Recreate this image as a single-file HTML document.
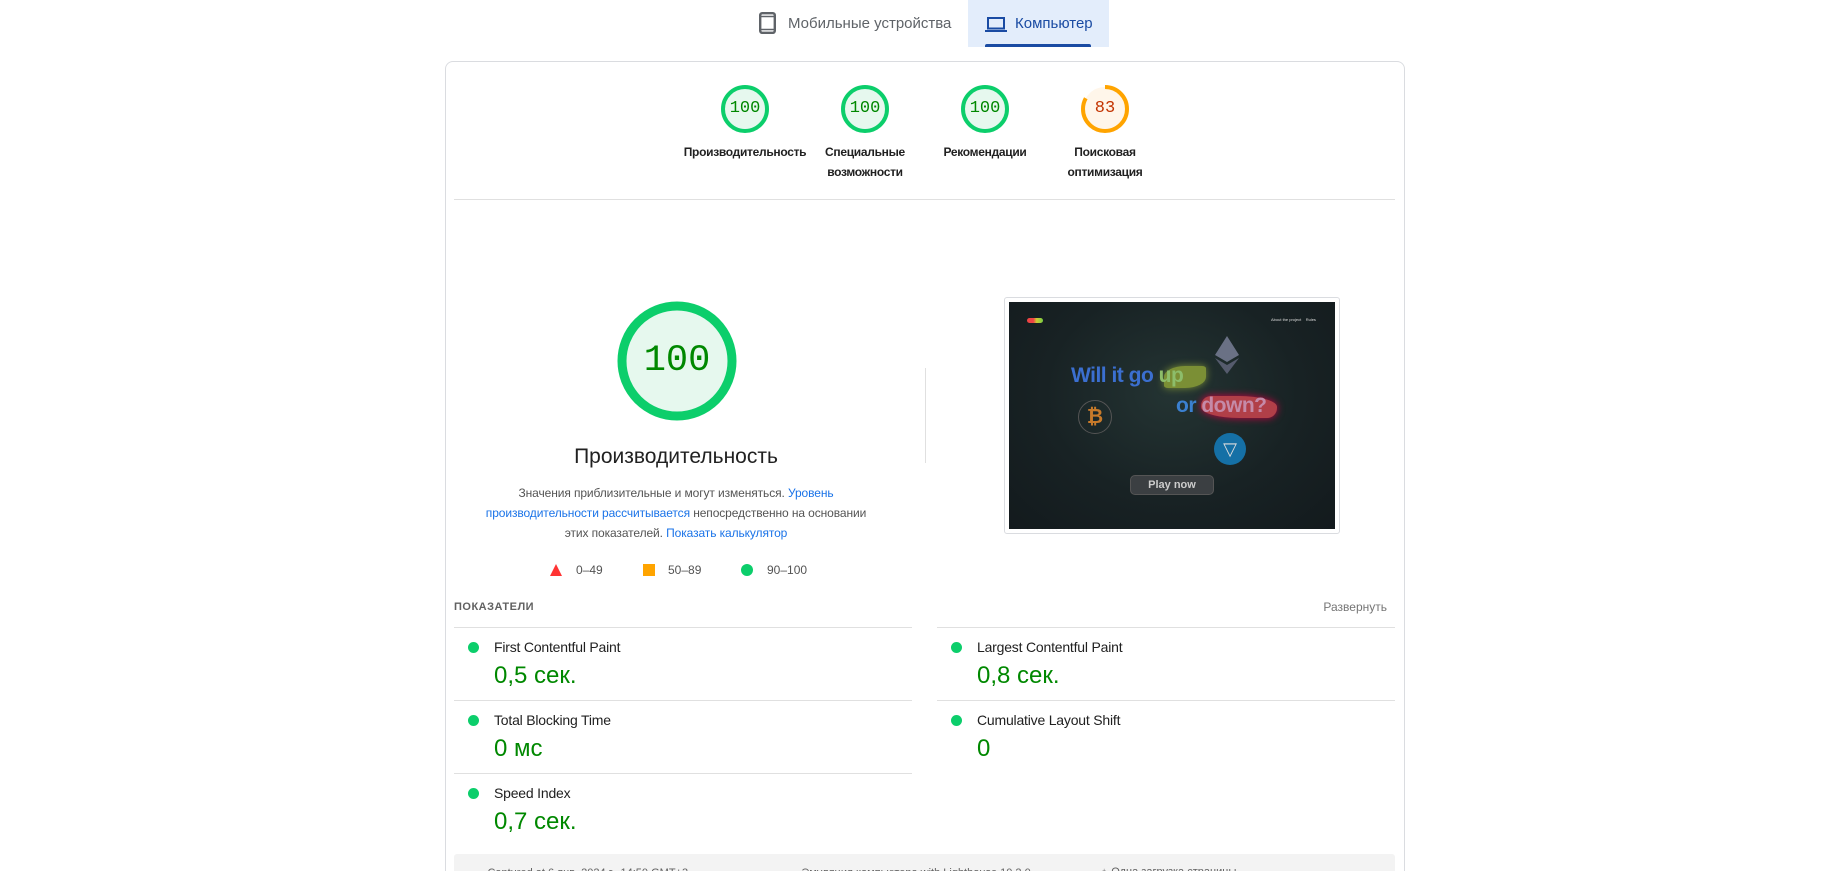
<!DOCTYPE html>
<html style="width:1848px;height:871px;overflow:hidden"><head><meta charset="utf-8"><style>
*{margin:0;padding:0;box-sizing:border-box}
body{width:1848px;height:871px;overflow:hidden;background:#fff;font-family:"Liberation Sans",Arial,sans-serif;position:relative;color:#212121}
.a{position:absolute}
.tabtxt{font-size:15px;top:15px;white-space:nowrap}
.card{left:445px;top:61px;width:960px;height:830px;border:1px solid #dadce0;border-radius:8px}
.g{width:48px;height:48px}
.gl{font-size:12px;font-weight:bold;color:#212121;text-align:center;line-height:20px;width:140px;letter-spacing:-0.3px}
.mono{font-family:"Liberation Mono",monospace}
.desc{font-size:12px;color:#545454;text-align:center;line-height:20px;width:406px;left:473px;top:483px;letter-spacing:-0.1px}
.desc a{color:#1a73e8;text-decoration:none}
.hr{height:1px;background:#e0e0e0}
.dot{width:11px;height:11px;border-radius:50%;background:#0cce6b}
.mt{font-size:14px;color:#212121;letter-spacing:-0.2px}
.mv{font-size:24px;color:#008800}
</style></head><body>
<svg class="a" style="left:759px;top:12px" width="17" height="22" viewBox="0 0 17 22"><rect x="1.2" y="1.2" width="14.6" height="19.6" rx="2" fill="none" stroke="#5f6368" stroke-width="2.4"/><line x1="1" y1="4.5" x2="16" y2="4.5" stroke="#5f6368" stroke-width="1.5"/><line x1="1" y1="17.5" x2="16" y2="17.5" stroke="#5f6368" stroke-width="1.5"/></svg>
<div class="a tabtxt" style="left:788px;color:#5f6368">Мобильные устройства</div>
<div class="a" style="left:968px;top:0;width:141px;height:47px;background:#e3edfb"></div>
<div class="a" style="left:985px;top:44px;width:106px;height:3px;background:#1a4ba3;border-radius:2px 2px 0 0"></div>
<svg class="a" style="left:985px;top:17px" width="22" height="15" viewBox="0 0 22 15"><rect x="3" y="1" width="16" height="10.5" fill="none" stroke="#1a4ba3" stroke-width="2"/><rect x="0" y="13" width="22" height="2" fill="#1a4ba3"/></svg>
<div class="a tabtxt" style="left:1015px;color:#1a4ba3">Компьютер</div>

<div class="a card"></div>

<svg class="a g" style="left:721px;top:85px" viewBox="0 0 48 48"><circle cx="24" cy="24" r="22" fill="#e6f8ee" stroke="#0cce6b" stroke-width="4"/></svg>
<div class="a mono" style="left:721px;top:85px;width:48px;line-height:48px;text-align:center;font-size:17px;color:#008800">100</div>
<svg class="a g" style="left:841px;top:85px" viewBox="0 0 48 48"><circle cx="24" cy="24" r="22" fill="#e6f8ee" stroke="#0cce6b" stroke-width="4"/></svg>
<div class="a mono" style="left:841px;top:85px;width:48px;line-height:48px;text-align:center;font-size:17px;color:#008800">100</div>
<svg class="a g" style="left:961px;top:85px" viewBox="0 0 48 48"><circle cx="24" cy="24" r="22" fill="#e6f8ee" stroke="#0cce6b" stroke-width="4"/></svg>
<div class="a mono" style="left:961px;top:85px;width:48px;line-height:48px;text-align:center;font-size:17px;color:#008800">100</div>
<svg class="a g" style="left:1081px;top:85px" viewBox="0 0 48 48"><circle cx="24" cy="24" r="22" fill="#fff6ea" stroke="none"/><circle cx="24" cy="24" r="22" fill="none" stroke="#ffa400" stroke-width="4" stroke-dasharray="114.7 200" transform="rotate(-90 24 24)"/></svg>
<div class="a mono" style="left:1081px;top:85px;width:48px;line-height:48px;text-align:center;font-size:17px;color:#c33300">83</div>
<div class="a gl" style="left:675px;top:142px">Производительность</div>
<div class="a gl" style="left:795px;top:142px">Специальные<br>возможности</div>
<div class="a gl" style="left:915px;top:142px">Рекомендации</div>
<div class="a gl" style="left:1035px;top:142px">Поисковая<br>оптимизация</div>
<div class="a hr" style="left:454px;top:199px;width:941px"></div>

<svg class="a" style="left:617px;top:301px" width="120" height="120" viewBox="0 0 120 120"><circle cx="60" cy="60" r="55" fill="#e6f8ee" stroke="#0cce6b" stroke-width="9"/></svg>
<div class="a mono" style="left:617px;top:301px;width:120px;line-height:120px;text-align:center;font-size:37px;color:#008800">100</div>
<div class="a" style="left:476px;top:445px;width:400px;text-align:center;font-size:21px;color:#212121">Производительность</div>
<div class="a desc">Значения приблизительные и могут изменяться. <a>Уровень производительности рассчитывается</a> непосредственно на основании этих показателей. <a>Показать калькулятор</a></div>
<svg class="a" style="left:550px;top:564px" width="12" height="12" viewBox="0 0 12 12"><polygon points="6,0 12,12 0,12" fill="#ff3333"/></svg>
<div class="a" style="left:576px;top:563px;font-size:12px;color:#545454">0–49</div>
<div class="a" style="left:643px;top:564px;width:12px;height:12px;background:#ffa400"></div>
<div class="a" style="left:668px;top:563px;font-size:12px;color:#545454">50–89</div>
<div class="a" style="left:741px;top:564px;width:12px;height:12px;border-radius:50%;background:#0cce6b"></div>
<div class="a" style="left:767px;top:563px;font-size:12px;color:#545454">90–100</div>
<div class="a" style="left:925px;top:368px;width:1px;height:95px;background:#e0e0e0"></div>

<div class="a" style="left:1004px;top:297px;width:336px;height:237px;border:1px solid #dadce0;border-radius:3px;background:#fff"></div>
<div class="a" style="left:1009px;top:302px;width:326px;height:227px;background:radial-gradient(ellipse at 50% 40%,#243433 0%,#182224 55%,#131a1d 100%);overflow:hidden">
  <div class="a" style="left:18px;top:16px;width:16px;height:5px;border-radius:3px;background:linear-gradient(90deg,#e44 0,#e44 40%,#cc3 60%,#7c4 100%)"></div>
  <div class="a" style="left:262px;top:15px;font-size:4px;color:#ddd;white-space:nowrap">About the project &nbsp;&nbsp; Rules</div>
  <svg class="a" style="left:206px;top:34px" width="24" height="38" viewBox="0 0 24 38"><polygon points="12,0 24,19 12,26 0,19" fill="#6a7185"/><polygon points="12,29 24,22 12,38 0,22" fill="#555b6d"/></svg>
  <div class="a" style="left:155px;top:64px;width:42px;height:22px;border-radius:50% 10% 50% 10%;background:#7b8f35;box-shadow:0 0 8px #7b8f35"></div>
  <div class="a" style="left:62px;top:62px;font-size:21px;font-weight:bold;color:#3b6fd0;white-space:nowrap;letter-spacing:-0.5px">Will it go <span style="color:#8dbd6a">up</span></div>
  <div class="a" style="left:192px;top:94px;width:76px;height:22px;border-radius:10px 50% 10px 50%;background:#b13f48;box-shadow:0 0 8px #c04"></div>
  <div class="a" style="left:167px;top:92px;font-size:21px;font-weight:bold;color:#3b80d0;white-space:nowrap;letter-spacing:-0.5px">or <span style="color:#c58aa8">down?</span></div>
  <div class="a" style="left:69px;top:98px;width:34px;height:34px;border-radius:50%;border:1px solid #555;text-align:center;line-height:32px;font-size:20px;font-weight:bold;color:#c77a2a">₿</div>
  <div class="a" style="left:205px;top:131px;width:32px;height:32px;border-radius:50%;background:#1570a6;text-align:center;line-height:32px;font-size:18px;color:#ddd">▽</div>
  <div class="a" style="left:121px;top:173px;width:84px;height:20px;border-radius:5px;background:#3b3f42;border:1px solid #555;text-align:center;line-height:18px;font-size:11px;font-weight:bold;color:#ccc">Play now</div>
</div>

<div class="a" style="left:454px;top:601px;font-size:11px;font-weight:bold;color:#616161;letter-spacing:0.5px">ПОКАЗАТЕЛИ</div>
<div class="a" style="left:1300px;top:600px;width:87px;text-align:right;font-size:12px;color:#757575">Развернуть</div>
<div class="a hr" style="left:454px;top:627px;width:458px"></div>
<div class="a hr" style="left:937px;top:627px;width:458px"></div>
<div class="a hr" style="left:454px;top:700px;width:458px"></div>
<div class="a hr" style="left:937px;top:700px;width:458px"></div>
<div class="a hr" style="left:454px;top:773px;width:458px"></div>

<div class="a dot" style="left:468px;top:642px"></div>
<div class="a mt" style="left:494px;top:639px">First Contentful Paint</div>
<div class="a mv" style="left:494px;top:662px">0,5 сек.</div>
<div class="a dot" style="left:951px;top:642px"></div>
<div class="a mt" style="left:977px;top:639px">Largest Contentful Paint</div>
<div class="a mv" style="left:977px;top:662px">0,8 сек.</div>
<div class="a dot" style="left:468px;top:715px"></div>
<div class="a mt" style="left:494px;top:712px">Total Blocking Time</div>
<div class="a mv" style="left:494px;top:735px">0 мс</div>
<div class="a dot" style="left:951px;top:715px"></div>
<div class="a mt" style="left:977px;top:712px">Cumulative Layout Shift</div>
<div class="a mv" style="left:977px;top:735px">0</div>
<div class="a dot" style="left:468px;top:788px"></div>
<div class="a mt" style="left:494px;top:785px">Speed Index</div>
<div class="a mv" style="left:494px;top:808px">0,7 сек.</div>

<div class="a" style="left:454px;top:854px;width:941px;height:17px;background:#f3f3f3;border-radius:3px 3px 0 0"></div>
<div class="a" style="left:474px;top:866px;font-size:11px;color:#616161;white-space:nowrap">▭ Captured at 6 янв. 2024 г., 14:50 GMT+3</div>
<div class="a" style="left:788px;top:866px;font-size:11px;color:#616161;white-space:nowrap">▭ Эмуляция компьютера with Lighthouse 10.2.0</div>
<div class="a" style="left:1100px;top:866px;font-size:11px;color:#616161;white-space:nowrap">♁ Одна загрузка страницы</div>
</body></html>
